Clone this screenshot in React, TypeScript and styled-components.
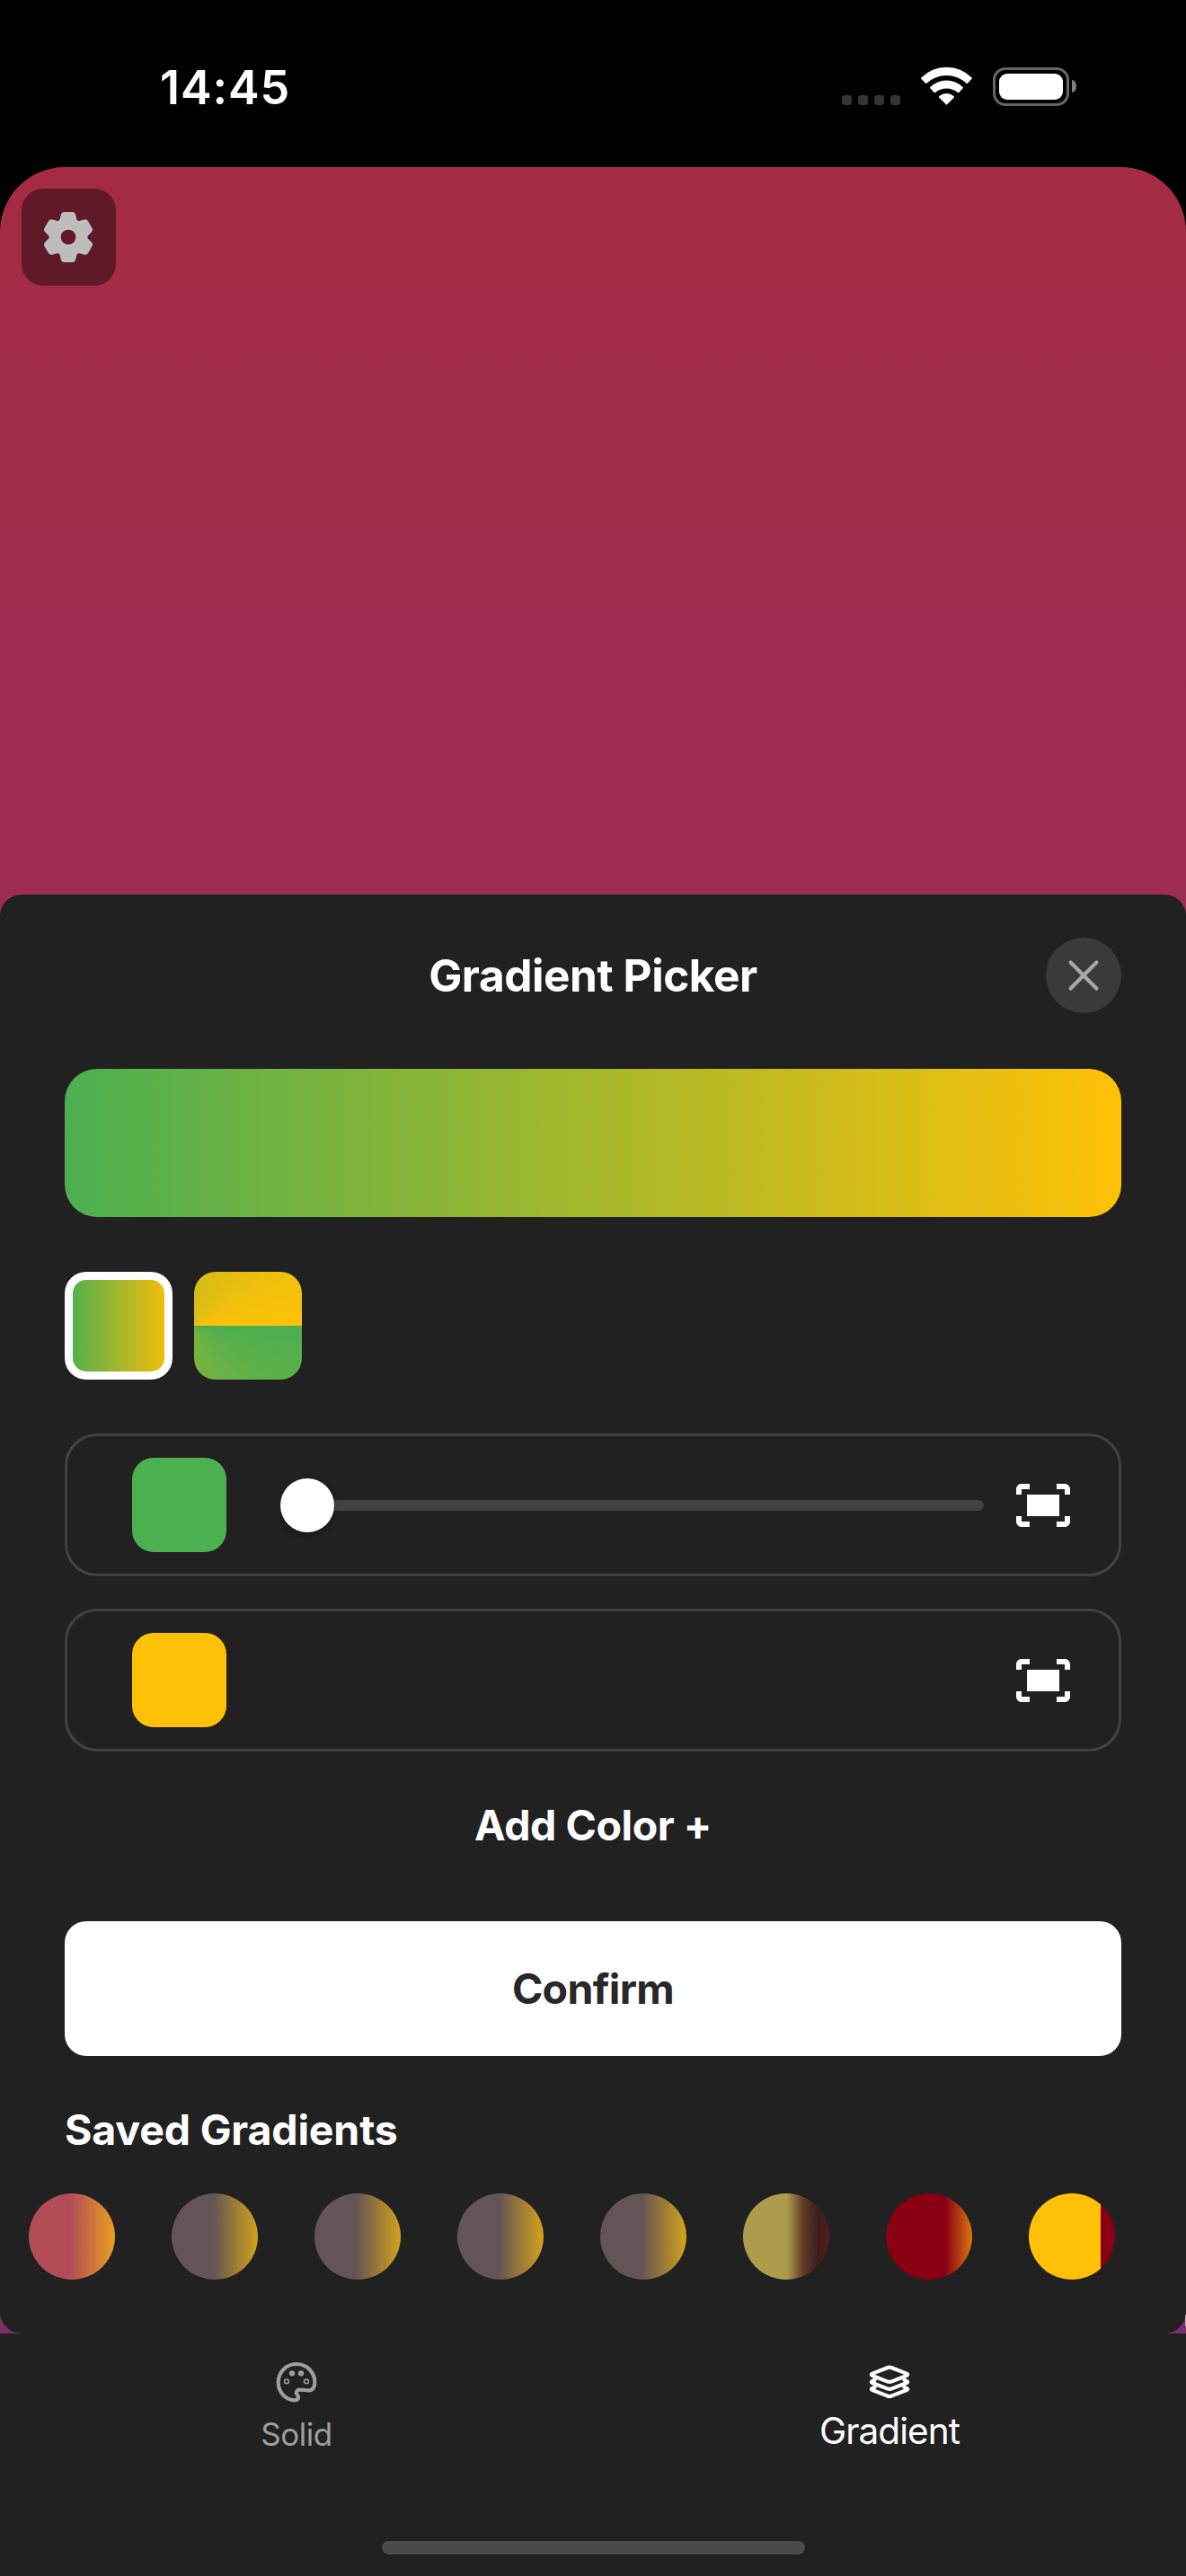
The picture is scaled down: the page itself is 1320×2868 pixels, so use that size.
import React from "react";
import styled, { createGlobalStyle } from "styled-components";

const GlobalStyle = createGlobalStyle`
  *, *::before, *::after { box-sizing: border-box; }
  body { margin: 0; background: #000; }
  button { font: inherit; color: inherit; border: 0; margin: 0; padding: 0; background: none; }
`;

const surface = "#212121";
const outline = "#424242";
const green = "#4caf50";
const amber = "#ffc107";

const Screen = styled.div`
  display: flex;
  flex-direction: column;
  width: 1320px;
  height: 2868px;
  overflow: hidden;
  background: #000;
  color: #fff;
  font-family: Inter, "Liberation Sans", sans-serif;
`;

const StatusBar = styled.header`
  display: flex;
  justify-content: space-between;
  height: 186px;
  padding: 0 122px 0 178px;
`;

const Clock = styled.time`
  height: 196px;
  line-height: 196px;
  font-size: 52px;
  font-weight: 600;
  letter-spacing: 0.9px;
`;

const StatusIcons = styled.div`
  display: flex;
  align-items: center;
  height: 44px;
  margin-top: 74px;
`;

const SignalDots = styled.div`
  display: flex;
  align-self: flex-end;
  gap: 7px;
  margin: 0 22px 1px 0;
`;

const Dot = styled.i`
  width: 11px;
  height: 11px;
  border-radius: 3.5px;
  background: #353535;
`;

const WifiIcon = styled.svg`
  width: 59.3px;
  height: 43.7px;
  margin-right: 21.7px;
  fill: #fff;
`;

const Battery = styled.div`
  width: 85px;
  height: 43px;
  padding: 4px;
  border: 3px solid #666;
  border-radius: 14px;
`;

const BatteryLevel = styled.div`
  height: 100%;
  border-radius: 9px;
  background: #fff;
`;

const BatteryCap = styled.i`
  width: 5px;
  height: 14px;
  margin-left: 3px;
  border-radius: 0 5px 5px 0 / 0 7px 7px 0;
  background: #808080;
`;

const Canvas = styled.main`
  flex: 1;
  display: flex;
  flex-direction: column;
  border-radius: 72px 72px 0 0;
  overflow: hidden;
  background: linear-gradient(180deg, #a52b44 0%, #9c2c54 30%, #7d2e6b 90%, #792f6f 100%);
`;

const Stage = styled.div`
  height: 810px;
  padding: 24px;
`;

const SettingsButton = styled.button`
  display: flex;
  align-items: center;
  justify-content: center;
  width: 105px;
  height: 108px;
  padding-right: 1px;
  border-radius: 24px;
  background: rgba(0, 0, 0, 0.41);

  svg {
    width: 60px;
    height: 60px;
    fill: #bdbdbd;
  }
`;

const Sheet = styled.section`
  position: relative;
  display: flex;
  flex-direction: column;
  height: 1602px;
  padding: 48px 72px 60px;
  border-radius: 24px;
  background: ${surface};
`;

const EdgeGlint = styled.i`
  position: absolute;
  right: 0;
  bottom: 8px;
  width: 1.5px;
  height: 13px;
  border-radius: 2px 0 0 2px;
  background: #bdb3bb;
`;

const SheetHeader = styled.div`
  display: grid;
  grid-template-columns: 84px 1fr 84px;
  align-items: center;
  height: 84px;
`;

const Title = styled.h1`
  grid-column: 2;
  margin: 0;
  text-align: center;
  font-size: 49.5px;
  line-height: 84px;
  font-weight: 700;
  letter-spacing: -0.42px;
`;

const CloseButton = styled.button`
  display: flex;
  align-items: center;
  justify-content: center;
  width: 84px;
  height: 84px;
  border-radius: 50%;
  background: #3a3a3a;

  svg {
    width: 36px;
    height: 36px;
    stroke: #a6a6ac;
    stroke-width: 4.2;
    stroke-linecap: round;
  }
`;

const Preview = styled.div`
  height: 165px;
  margin: 61.5px 0;
  border-radius: 36px;
  background: linear-gradient(90deg, ${green}, ${amber});
`;

const KindPicker = styled.div`
  display: flex;
  gap: 24px;
  margin-bottom: 60px;
`;

const Kind = styled.button<{ $fill: string; $selected?: boolean }>`
  width: 120px;
  height: 120px;
  border-radius: 24px;
  padding: ${(p) => (p.$selected ? "9px" : "0")};
  background: ${(p) => (p.$selected ? "#fff" : p.$fill)};

  &::before {
    content: "";
    display: ${(p) => (p.$selected ? "block" : "none")};
    height: 102px;
    border-radius: 15px;
    background: ${(p) => p.$fill};
  }
`;

const Stops = styled.div`
  display: flex;
  flex-direction: column;
  gap: 36px;
`;

const StopRow = styled.div`
  display: flex;
  align-items: center;
  height: 159px;
  padding: 0 48px 0 72px;
  border: 3px solid ${outline};
  border-radius: 36px;
`;

const Swatch = styled.button<{ $color: string }>`
  width: 105px;
  height: 105px;
  border-radius: 24px;
  background: ${(p) => p.$color};
`;

const Slider = styled.div`
  flex: 1;
  display: flex;
  align-items: center;
  margin: 0 30px 0 60px;
`;

const Thumb = styled.i`
  z-index: 1;
  width: 60px;
  height: 60px;
  border-radius: 50%;
  background: #fff;
  box-shadow: 0 3px 6px rgba(0, 0, 0, 0.28);
`;

const Track = styled.div`
  flex: 1;
  height: 12px;
  margin-left: -36px;
  border-radius: 6px;
  background: ${outline};
`;

const FitIcon = styled.svg`
  width: 72px;
  height: 72px;
  margin-left: auto;
  fill: #fff;
`;

const AddButton = styled.button`
  height: 164px;
  font-size: 46.5px;
  line-height: 164px;
  font-weight: 700;
  letter-spacing: -0.45px;
`;

const ConfirmButton = styled.button`
  height: 150px;
  margin-top: 25px;
  border-radius: 24px;
  background: #fff;
  color: #29272a;
  font-size: 46.5px;
  line-height: 150px;
  font-weight: 700;
  letter-spacing: -0.7px;
`;

const SavedTitle = styled.h2`
  margin: 52px 0 41px;
  font-size: 46.5px;
  line-height: 60px;
  font-weight: 700;
  letter-spacing: -0.18px;
`;

const SavedList = styled.div`
  display: flex;
  gap: 63px;
  margin: 0 -40.5px;
`;

const SavedItem = styled.button<{ $fill: string }>`
  flex: none;
  width: 96px;
  height: 96px;
  border-radius: 50%;
  background: ${(p) => p.$fill};
`;

const TabBar = styled.nav`
  flex: 1;
  display: grid;
  grid-template-columns: 1fr 1fr;
  grid-template-rows: 231px 15px;
  background: ${surface};
`;

const Tab = styled.button<{ $active?: boolean }>`
  display: flex;
  flex-direction: column;
  align-items: center;
  padding-top: 27px;
  color: ${(p) => (p.$active ? "#fff" : "#9e9e9e")};
  font-size: ${(p) => (p.$active ? 40.5 : 35)}px;
  line-height: ${(p) => (p.$active ? 55 : 63)}px;
  letter-spacing: ${(p) => (p.$active ? -0.95 : -0.5)}px;
  font-weight: 400;

  svg {
    width: 54px;
    height: 54px;
    fill: none;
    stroke: currentColor;
    stroke-linejoin: round;
    stroke-linecap: round;
  }
`;

const HomeIndicator = styled.div`
  grid-column: 1 / -1;
  justify-self: center;
  width: 471px;
  height: 15px;
  border-radius: 7.5px;
  background: #4b4b4b;
`;

const toothPoints: [string, number[][]][] = [
  ["L", [[-27, -64]]],
  ["L", [[-24.5, -75]]],
  ["Q", [[-22, -84], [-13, -84]]],
  ["L", [[13, -84]]],
  ["Q", [[22, -84], [24.5, -75]]],
  ["L", [[27, -64]]],
  ["Q", [[29.5, -51], [41.9, -55.4]]],
];

const gearPath = (() => {
  let d = "M-27 -64 ";
  for (let i = 0; i < 6; i++) {
    const a = (i * Math.PI) / 3;
    for (const [cmd, pts] of toothPoints) {
      d +=
        cmd +
        pts
          .map(([x, y]) => {
            const rx = x * Math.cos(a) - y * Math.sin(a);
            const ry = x * Math.sin(a) + y * Math.cos(a);
            return `${rx.toFixed(2)} ${ry.toFixed(2)}`;
          })
          .join(" ") +
        " ";
    }
  }
  return d + "Z M25 0 A25 25 0 1 0 -25 0 A25 25 0 1 0 25 0 Z";
})();

const Gear = () => (
  <svg viewBox="-90 -90 180 180">
    <path fillRule="evenodd" d={gearPath} />
  </svg>
);

const FitScreen = () => (
  <FitIcon viewBox="0 0 24 24">
    <path d="M17 4h3c1.1 0 2 .9 2 2v2h-2V6h-3V4zM4 8V6h3V4H4c-1.1 0-2 .9-2 2v2h2zm16 8v2h-3v2h3c1.1 0 2-.9 2-2v-2h-2zM7 18H4v-2H2v2c0 1.1.9 2 2 2h3v-2zM18 8H6v8h12V8z" />
  </FitIcon>
);

const Palette = () => (
  <svg viewBox="309 74 162 162" strokeWidth="12.5">
    <path d="M390 95 C424 95 451 122 451 156 C451 174 445 183 431 183 C420 183 411 181 401 181 C391 181 387 188 391 195 C395 201 397 203 396 208 C395 214 390 216 383 216 C352 214 329 188 329 156 C329 122 356 95 390 95Z" />
    <g fill="currentColor" stroke="none">
      <circle cx="375" cy="126" r="9.5" />
      <circle cx="405" cy="126" r="9.5" />
    </g>
    <g strokeWidth="4.5">
      <circle cx="357" cy="153" r="7.3" />
      <circle cx="423" cy="153" r="7.3" />
    </g>
  </svg>
);

const Layers = () => (
  <svg viewBox="309 75 162 162" strokeWidth="12.5">
    <path d="M396 108 L447 128 Q454 131.5 447 135 L398 154 Q390 157 382 154 L333 135 Q326 131.5 333 128 L384 108 Q390 106 396 108Z" />
    <path d="M341 149 L333 153 Q326 156 333 159 L382 178 Q390 181 398 178 L447 159 Q454 156 447 153 L439 149" />
    <path d="M341 173 L333 177 Q326 180 333 183 L382 202 Q390 206 398 202 L447 183 Q454 180 447 177 L439 173" />
  </svg>
);

const Wifi = () => (
  <WifiIcon viewBox="372 103 178 131">
    <path d="M376 144 Q374 142 376 140.5 A118 118 0 0 1 545 140.5 Q547 142 545 144 L531 159 Q529 161 527 159 A98 98 0 0 0 394 159 Q392 161 390 159Z" />
    <path d="M406 176 Q404 174 406 172 A77 77 0 0 1 515 172 Q517 174 515 176 L502 190 Q500 192 498 190 A58 58 0 0 0 423 190 Q421 192 419 190Z" />
    <path d="M436 207 Q433 204 436 202 A38 38 0 0 1 484.5 202 Q488 204 485 207 L463 229 Q460.5 232 458 229Z" />
  </WifiIcon>
);

const mauve = "linear-gradient(90deg, #645455 48%, #d2a21c 100%)";

const savedGradients = [
  "linear-gradient(90deg, #b24d58 48%, #ea9d20 100%)",
  mauve,
  mauve,
  mauve,
  mauve,
  "linear-gradient(90deg, #ad9c4b 51%, #5f3a26 70%, #3a1c1e 87%, #5c1a1c 100%)",
  "linear-gradient(90deg, #880012 69%, #d9780e 100%)",
  "linear-gradient(90deg, #ffc107 83%, #880012 83%)",
];

export default function App() {
  return (
    <Screen>
      <GlobalStyle />
      <StatusBar>
        <Clock>14:45</Clock>
        <StatusIcons>
          <SignalDots>
            <Dot />
            <Dot />
            <Dot />
            <Dot />
          </SignalDots>
          <Wifi />
          <Battery>
            <BatteryLevel />
          </Battery>
          <BatteryCap />
        </StatusIcons>
      </StatusBar>
      <Canvas>
        <Stage>
          <SettingsButton aria-label="Settings">
            <Gear />
          </SettingsButton>
        </Stage>
        <Sheet>
          <SheetHeader>
            <Title>Gradient Picker</Title>
            <CloseButton aria-label="Close">
              <svg viewBox="-18 -18 36 36">
                <path d="M-14.4 -14.4 L14.4 14.4 M14.4 -14.4 L-14.4 14.4" />
              </svg>
            </CloseButton>
          </SheetHeader>
          <Preview />
          <KindPicker>
            <Kind $selected $fill="linear-gradient(90deg, #55b04c, #f0be0d)" />
            <Kind $fill={`conic-gradient(from 90deg at 0 50%, ${green}, ${amber})`} />
          </KindPicker>
          <Stops>
            <StopRow>
              <Swatch $color={green} />
              <Slider>
                <Thumb />
                <Track />
              </Slider>
              <FitScreen />
            </StopRow>
            <StopRow>
              <Swatch $color={amber} />
              <FitScreen />
            </StopRow>
          </Stops>
          <AddButton>Add Color +</AddButton>
          <ConfirmButton>Confirm</ConfirmButton>
          <SavedTitle>Saved Gradients</SavedTitle>
          <SavedList>
            {savedGradients.map((fill, i) => (
              <SavedItem key={i} $fill={fill} />
            ))}
          </SavedList>
          <EdgeGlint />
        </Sheet>
        <TabBar>
          <Tab>
            <Palette />
            Solid
          </Tab>
          <Tab $active>
            <Layers />
            Gradient
          </Tab>
          <HomeIndicator />
        </TabBar>
      </Canvas>
    </Screen>
  );
}
